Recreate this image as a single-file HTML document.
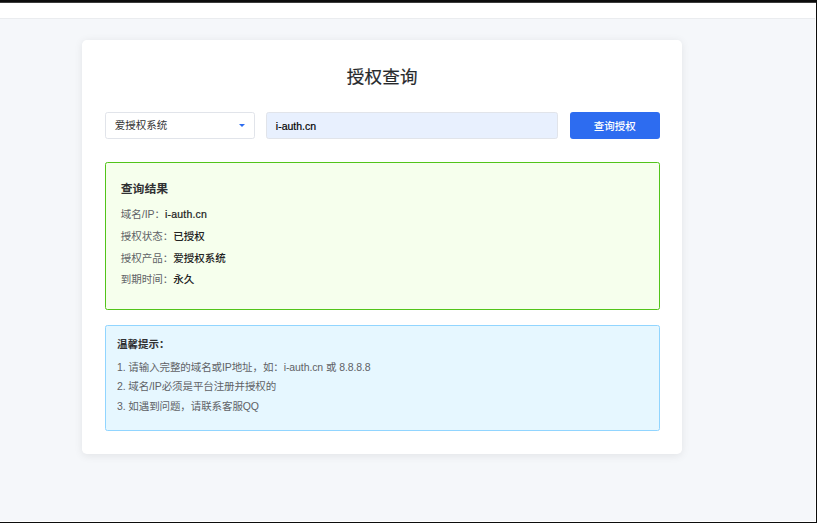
<!DOCTYPE html>
<html lang="zh-CN">
<head>
<meta charset="utf-8">
<title>授权查询</title>
<style>
*{box-sizing:border-box;}
html,body{margin:0;padding:0;}
body{width:817px;height:523px;overflow:hidden;background:#f5f7fa;position:relative;
 font-family:"Liberation Sans","Noto Sans CJK SC",sans-serif;}
.topblack{position:absolute;left:0;top:0;width:817px;height:2px;background:#0c0c0c;border-bottom:1px solid #3c3c3c;box-sizing:content-box;}
.topwhite{position:absolute;left:0;top:3px;width:817px;height:16px;background:#fff;border-bottom:1px solid #eaecef;}
.rightwhite{position:absolute;left:814.6px;top:2.5px;width:1.2px;height:520px;background:#fff;}
.rightblack{position:absolute;left:815.8px;top:0;width:1.2px;height:523px;background:#0c0c0c;}
.bottomwhite{position:absolute;left:0;top:520.6px;width:816px;height:1.2px;background:#fff;}
.bottomblack{position:absolute;left:0;top:521.7px;width:817px;height:1.3px;background:#0c0c0c;}
.stage{position:absolute;left:0;top:0;width:1089.33px;height:697.33px;zoom:0.75;}
.card{position:absolute;left:109.33px;top:53.33px;width:800px;background:#fff;border-radius:6.5px;
 box-shadow:0 2px 12px 0 rgba(0,0,0,0.08);padding:30px 28.67px 30px 31.33px;}
h2{margin:0 0 30px;font-size:23.4px;line-height:36px;font-weight:400;-webkit-text-stroke:0.25px #26282b;text-align:center;color:#26282b;position:relative;top:2.4px;left:-1.1px;letter-spacing:0.3px;}
.form{display:flex;align-items:center;height:36px;margin-bottom:31px;}
.select{width:200px;height:35px;border:1px solid #e1e4ea;border-radius:3.5px;background:#fff;position:relative;
 font-size:14px;line-height:34.2px;padding-left:11.2px;color:#333;}
.select:after{content:"";position:absolute;right:13px;top:14px;border-left:4px solid transparent;border-right:4px solid transparent;border-top:5px solid #2d6cf0;}
.input{flex:1;margin:0 16px 0 13.67px;height:35px;border:1px solid #e1e4ea;border-radius:3.5px;background:#e8f0fe;
 font-size:14px;line-height:35.4px;padding-left:12.2px;color:#000;-webkit-text-stroke:0.25px #000;}
.btn{width:120px;height:36px;border-radius:4px;background:#2d6cf0;color:#fff;font-size:14px;line-height:37.6px;text-align:center;font-weight:500;text-indent:-2px;}
.result{border:1px solid #52c41a;background:#f6ffed;border-radius:3.2px;padding:20px 20px 20px 19px;height:197.33px;}
.result h3{margin:0 0 12px;font-size:15.8px;line-height:26px;font-weight:700;color:#303133;position:relative;top:1.8px;}
.result p{margin:0 0 8px;font-size:14px;line-height:21px;color:#606266;position:relative;top:0.5px;}
.result p b{color:#222;font-weight:500;}
.result p b.lat{-webkit-text-stroke:0.3px #222;letter-spacing:0.25px;}
.tips{margin-top:20px;border:1px solid #91d5ff;background:#e6f7ff;border-radius:3.2px;padding:15px 15px 15px 14px;height:141.33px;}
.tips h4,.tips p{position:relative;top:-0.6px;}
.tips h4{margin:0 0 8px;font-size:14px;line-height:20px;font-weight:700;color:#303133;}
.tips p{margin:0;font-size:14px;line-height:25.8px;color:#606266;letter-spacing:-0.13px;}
</style>
</head>
<body>
<div class="stage">
 <div class="card">
  <h2>授权查询</h2>
  <div class="form">
   <div class="select">爱授权系统</div>
   <div class="input">i-auth.cn</div>
   <div class="btn">查询授权</div>
  </div>
  <div class="result">
   <h3>查询结果</h3>
   <p>域名/IP：<b class="lat">i-auth.cn</b></p>
   <p>授权状态：<b>已授权</b></p>
   <p>授权产品：<b>爱授权系统</b></p>
   <p>到期时间：<b>永久</b></p>
  </div>
  <div class="tips">
   <h4>温馨提示：</h4>
   <p>1. 请输入完整的域名或IP地址，如：i-auth.cn 或 8.8.8.8</p>
   <p>2. 域名/IP必须是平台注册并授权的</p>
   <p>3. 如遇到问题，请联系客服QQ</p>
  </div>
 </div>
</div>
<div class="topwhite"></div>
<div class="topblack"></div>
<div class="rightwhite"></div>
<div class="bottomwhite"></div>
<div class="rightblack"></div>
<div class="bottomblack"></div>
</body>
</html>
